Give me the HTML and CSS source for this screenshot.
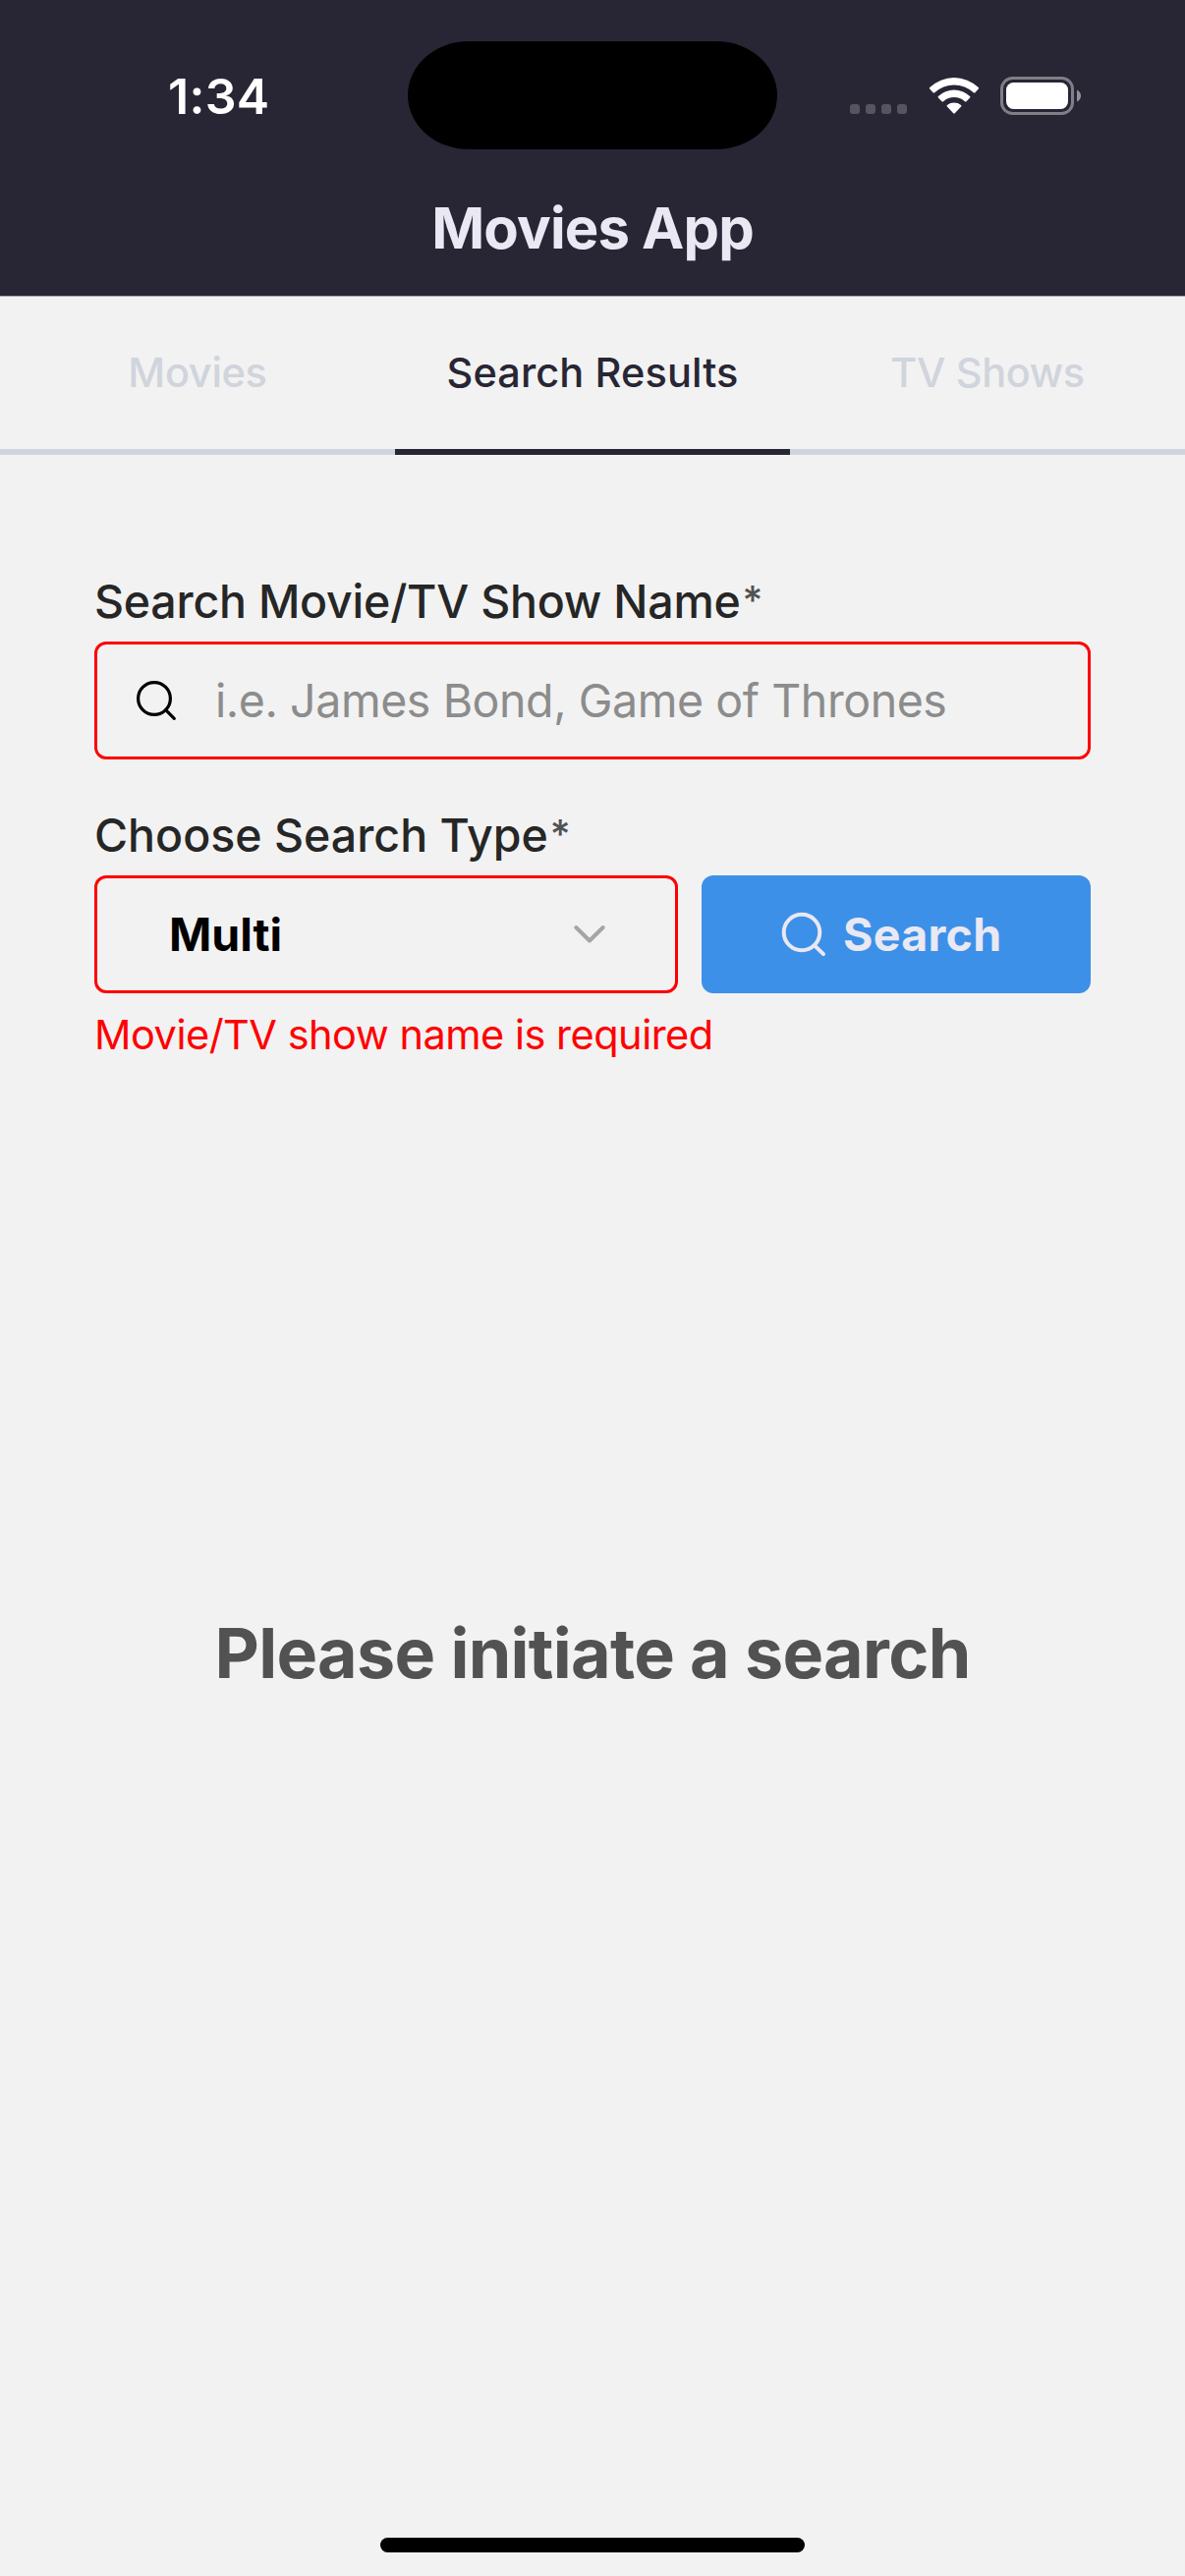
FILE: index.html
```html
<!DOCTYPE html>
<html lang="en">
<head>
<meta charset="utf-8">
<title>Movies App</title>
<link rel="stylesheet" href="styles.css">
</head>
<body>
<div class="screen">
  <header class="header">
    <div class="status">
      <div class="status-time">1:34</div>
      <div class="island"></div>
      <div class="status-icons">
        <svg class="signal" width="58" height="40" viewBox="0 0 58 40" fill="#55545f">
          <rect x="0" y="28" width="10" height="10" rx="3"/>
          <rect x="16" y="28" width="10" height="10" rx="3"/>
          <rect x="32" y="28" width="10" height="10" rx="3"/>
          <rect x="48" y="28" width="10" height="10" rx="3"/>
        </svg>
        <svg class="wifi" width="52" height="40" viewBox="0 0 52 40" fill="#fff">
          <path d="M1.200 12.600Q0.500 11.800 1.200 11A36 36 0 0 1 50.800 11Q51.500 11.800 50.800 12.600L47.400 16.200Q46.600 17 45.800 16.200A29 29 0 0 0 6.200 16.200Q5.400 17 4.600 16.200Z"/>
          <path d="M9.900 21.600Q9.100 20.800 9.900 20A23.500 23.500 0 0 1 42.100 20Q42.900 20.800 42.100 21.600L38.500 25.200Q37.700 25.900 36.900 25.200A16.200 16.200 0 0 0 15.100 25.200Q14.300 25.900 13.500 25.200Z"/>
          <path d="M18.900 30.500Q18.100 29.700 18.900 28.900A11.500 11.500 0 0 1 33.100 28.900Q33.900 29.700 33.100 30.500L26.800 37.300Q26 38.100 25.200 37.300Z"/>
        </svg>
        <svg class="battery" width="84" height="40" viewBox="0 0 84 40">
          <rect x="1.500" y="1.500" width="72" height="36" rx="11" fill="none" stroke="#807f88" stroke-width="3"/>
          <rect x="6" y="6" width="63" height="27" rx="7.500" fill="#fff"/>
          <path d="M78 13.500Q82 15.500 82 19.500T78 25.500Z" fill="#918f97"/>
        </svg>
      </div>
    </div>
    <h1 class="title">Movies App</h1>
  </header>

  <nav class="tabs">
    <a class="tab tab-movies">Movies</a>
    <a class="tab tab-active">Search Results</a>
    <a class="tab tab-tv">TV Shows</a>
  </nav>

  <main class="main">
    <form class="form">
      <label class="label label-name"><span>Search Movie/TV Show Name</span><span class="star">*</span></label>
      <div class="field">
        <svg class="field-icon" width="42" height="42" viewBox="0 0 42 42" fill="none" stroke="#000" stroke-width="3.200" stroke-linecap="round">
          <circle cx="18" cy="19" r="16.400"/>
          <path d="M29.700 30.700L38.300 39.300"/>
        </svg>
        <span class="placeholder">i.e. James Bond, Game of Thrones</span>
      </div>
      <label class="label label-type"><span>Choose Search Type</span><span class="star">*</span></label>
      <div class="row">
        <div class="select">
          <span>Multi</span>
          <svg width="34" height="20" viewBox="0 0 34 20" fill="none" stroke="#a5a5a5" stroke-width="4" stroke-linecap="round" stroke-linejoin="round">
            <path d="M3.300 3L17 16.500L30.700 3"/>
          </svg>
        </div>
        <div class="button">
          <svg width="48" height="48" viewBox="0 0 48 48" fill="none" stroke="#e9e8f3" stroke-width="4" stroke-linecap="round">
            <circle cx="22" cy="22" r="18.300"/>
            <path d="M35.500 35.800L44 44.200"/>
          </svg>
          <span>Search</span>
        </div>
      </div>
      <p class="error">Movie/TV show name is required</p>
    </form>
    <h2 class="empty">Please initiate a search</h2>
  </main>
  <div class="home"></div>
</div>
</body>
</html>
```
FILE: styles.css
```css
* { box-sizing: border-box; margin: 0; padding: 0; }

body {
  width: 1206px;
  background: #f2f2f2;
  font-family: Inter, "Liberation Sans", sans-serif;
}

svg { display: block; flex: none; }

.screen {
  display: flex;
  flex-direction: column;
  height: 2622px;
  background: #f2f2f2;
}

/* Header */
.header {
  height: 302px;
  background: #282634;
  border-bottom: 1px solid #a7a6ad;
}

.status {
  display: grid;
  grid-template-columns: 415px 376px 415px;
  height: 176px;
  padding-top: 42px;
}

.status-time {
  height: 112px;
  padding-left: 171px;
  font-size: 50px;
  font-weight: 600;
  line-height: 112px;
  letter-spacing: 0.3px;
  color: #fff;
}

.island {
  height: 110px;
  border-radius: 62px / 55px;
  background: #000;
}

.status-icons {
  display: flex;
  align-items: flex-start;
  padding: 36px 0 0 74px;
}

.wifi { margin-left: 22px; }
.battery { margin-left: 21px; }

.title {
  font-size: 58px;
  font-weight: 700;
  line-height: 112px;
  letter-spacing: -0.85px;
  text-align: center;
  color: #e9e8f3;
}

/* Tabs */
.tabs {
  display: grid;
  grid-template-columns: repeat(3, 402px);
}

.tab {
  height: 161px;
  border-bottom: 6px solid #d0d4dc;
  font-size: 41.500px;
  font-weight: 500;
  line-height: 155px;
  text-align: center;
  color: #d0d4dc;
}

.tab-movies { letter-spacing: -0.31px; }
.tab-tv { letter-spacing: -0.4px; }

.tab-active {
  border-color: #282634;
  letter-spacing: 0.1px;
  color: #282634;
}

/* Search form */
.main {
  display: flex;
  flex: 1;
  flex-direction: column;
}

.form { padding: 119px 96px 0; }

.label {
  display: flex;
  height: 60px;
  font-size: 46.500px;
  font-weight: 500;
  line-height: 60px;
  color: #262626;
}

.label-name { letter-spacing: -0.23px; }
.label-type { margin-top: 47px; }

.star {
  margin-left: 2px;
  font-size: 40px;
  font-weight: 500;
  line-height: 58px;
  color: #525252;
}

.field {
  display: flex;
  align-items: center;
  height: 120px;
  margin-top: 11px;
  padding-left: 40px;
  border: 3px solid #f00;
  border-radius: 12px;
}

.placeholder {
  margin-left: 38px;
  font-size: 46.500px;
  line-height: 60px;
  letter-spacing: -0.43px;
  color: #8c8c8c;
}

.row {
  display: grid;
  grid-template-columns: 594px 396px;
  gap: 24px;
  height: 120px;
  margin-top: 11px;
}

.select {
  display: flex;
  align-items: center;
  justify-content: space-between;
  padding: 0 70px 0 73px;
  border: 3px solid #f00;
  border-radius: 12px;
  font-size: 46.500px;
  font-weight: 700;
  line-height: 60px;
  color: #000;
}

.button {
  display: flex;
  align-items: center;
  padding-left: 80px;
  border-radius: 12px;
  background: #3d90e7;
  font-size: 46.500px;
  font-weight: 700;
  line-height: 60px;
  letter-spacing: 0.29px;
  color: #e9e8f3;
}

.button span { margin-left: 16px; }

.error {
  margin-top: 15px;
  font-size: 41.500px;
  line-height: 54px;
  letter-spacing: -0.5px;
  color: #f00;
}

.empty {
  margin-top: 552px;
  font-size: 70px;
  font-weight: 700;
  line-height: 101px;
  letter-spacing: -0.7px;
  text-align: center;
  color: #525252;
}

/* Home indicator */
.home {
  align-self: center;
  width: 432px;
  height: 15px;
  margin-bottom: 24px;
  border-radius: 8px;
  background: #000;
}
```
